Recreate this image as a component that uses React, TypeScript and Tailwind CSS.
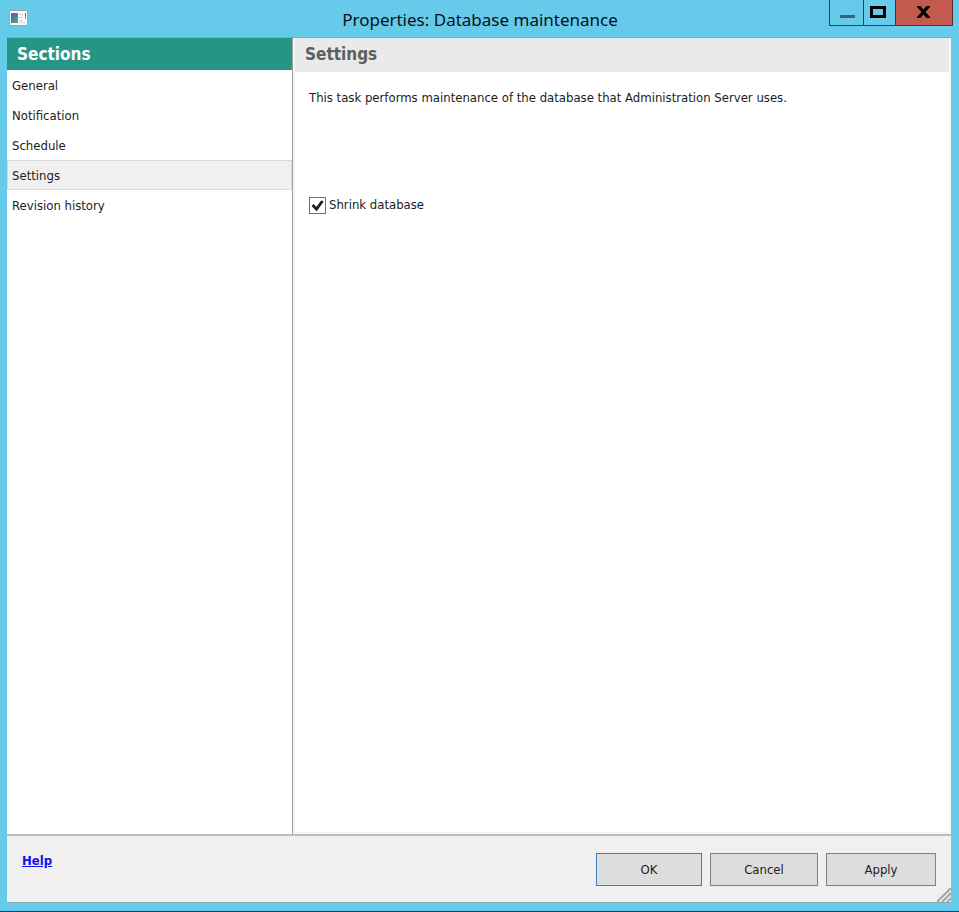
import { useState } from 'react';
import clsx from 'clsx';

const sections = ['General', 'Notification', 'Schedule', 'Settings', 'Revision history'];

function WindowIcon() {
  return (
    <svg width="19" height="16" viewBox="0 0 19 16" aria-hidden="true">
      <defs>
        <linearGradient id="pane" x1="0" y1="0" x2="1" y2="1">
          <stop offset="0.300" stopColor="#4a7396" />
          <stop offset="0.900" stopColor="#5aa67c" />
        </linearGradient>
      </defs>
      <rect x="0.5" y="0.5" width="18" height="15" fill="#fbfbfb" stroke="#a3a5a6" />
      <rect x="2" y="3" width="7" height="10" fill="url(#pane)" />
      <path d="M10 4.500h4M10 7.500h4M10 10.500h4M10 12.500h6" stroke="#cdd1d3" />
      <rect x="16" y="3" width="1" height="3" fill="#3b6288" />
      <rect x="16" y="6" width="1" height="3" fill="#5aa67c" />
    </svg>
  );
}

function TitleBar() {
  return (
    <header className="grid h-[37px] grid-cols-[1fr_auto_1fr] items-start pr-[6px] pl-[7px]">
      <div className="pt-[10px] pl-[2px]">
        <WindowIcon />
      </div>
      <h1 className="pt-2 font-['Noto_Sans',sans-serif] text-[17px] leading-6 text-[#081216]">
        Properties: Database maintenance
      </h1>
      <div className="flex h-[26px] justify-end">
        <button
          type="button"
          aria-label="Minimize"
          className="flex w-[34px] justify-end border-b border-l border-[#3d3d3d] pt-[15px] pr-2"
        >
          <span className="h-[3px] w-[15px] bg-[#336675]" />
        </button>
        <button
          type="button"
          aria-label="Maximize"
          className="flex w-8 justify-center border-b border-l border-[#3d3d3d] pt-[6px]"
        >
          <span className="mr-1 h-3 w-4 border-[3px] border-black" />
        </button>
        <button
          type="button"
          aria-label="Close"
          className="flex w-[58px] justify-center border-x border-b border-[#5a2f31] bg-[#c35a50] pt-[6px]"
        >
          <svg className="mr-px" width="13" height="12" viewBox="0 0 13 12" aria-hidden="true">
            <path d="M0 0h3.500l3 3.500 3-3.500H13v1L8.500 6l4.500 5v1H9.500l-3-3.500-3 3.500H0v-1l4.500-5L0 1z" fill="#000" />
          </svg>
        </button>
      </div>
    </header>
  );
}

interface SidebarProps {
  active: string;
  onSelect: (name: string) => void;
}

function Sidebar({ active, onSelect }: SidebarProps) {
  return (
    <nav className="w-[286px] shrink-0 border-r border-[#a0a0a0] bg-white">
      <h2 className="h-8 bg-[#239685] pl-[10px] text-[17px] leading-8 font-bold text-white">
        Sections
      </h2>
      <ul>
        {sections.map((name) => (
          <li key={name}>
            <button
              type="button"
              onClick={() => onSelect(name)}
              className={clsx(
                'block h-[30px] w-full border pt-px pl-1 text-left',
                name === active ? 'border-[#dadada] bg-[#f0f0f0]' : 'border-transparent'
              )}
            >
              {name}
            </button>
          </li>
        ))}
      </ul>
    </nav>
  );
}

function SettingsPanel() {
  const [shrink, setShrink] = useState(true);

  return (
    <main className="min-w-0 flex-1 border-x-2 border-b-2 border-[#f4f4f4] bg-white">
      <h2 className="h-[34px] bg-[#e8eaeb] pl-[10px] text-[17px] leading-8 font-bold text-[#606060]">
        Settings
      </h2>
      <div className="px-[14px] pt-4">
        <p className="leading-5">
          This task performs maintenance of the database that Administration Server uses.
        </p>
        <label className="mt-[87px] flex w-fit items-center gap-[3px] leading-5">
          <span className="relative flex">
            <input
              type="checkbox"
              checked={shrink}
              onChange={(e) => setShrink(e.target.checked)}
              className="size-[17px] appearance-none border border-[#707070] bg-white"
            />
            {shrink && (
              <svg
                className="pointer-events-none absolute inset-0"
                width="17"
                height="17"
                viewBox="0 0 17 17"
                aria-hidden="true"
              >
                <path d="M3.500 8l4 4 6-8" fill="none" stroke="#1c1c1c" strokeWidth="2.800" />
              </svg>
            )}
          </span>
          Shrink database
        </label>
      </div>
    </main>
  );
}

function Footer() {
  const button = 'h-[33px] border bg-[#dddddd]';

  return (
    <footer className="relative flex h-[68px] items-start justify-between border-t-2 border-[#bdbdbd] bg-[#f0f0f0] px-[15px]">
      <a href="#help" className="mt-[15px] leading-5 font-bold text-[#1010f0] underline">
        Help
      </a>
      <div className="mt-[17px] flex gap-2">
        <button type="button" className={clsx(button, 'w-[106px] border-[#3c7fb9]')}>
          OK
        </button>
        <button type="button" className={clsx(button, 'w-[108px] border-[#808080]')}>
          Cancel
        </button>
        <button type="button" className={clsx(button, 'w-[110px] border-[#808080]')}>
          Apply
        </button>
      </div>
      {/* resize grip */}
      <svg className="absolute right-0 bottom-0" width="14" height="14" viewBox="0 0 14 14" aria-hidden="true">
        <path d="M0 14L14 0M5 14l9-9M10 14l4-4" stroke="#a3a3a3" strokeWidth="2" />
      </svg>
    </footer>
  );
}

export default function App() {
  const [active, setActive] = useState('Settings');

  return (
    <div className="flex min-h-screen flex-col border-b border-[#1f3a45] bg-[#66caea] pb-2 font-['DejaVu_Sans_Condensed','DejaVu_Sans',sans-serif] text-[13px] text-[#1c1c1c]">
      <TitleBar />
      <div className="mr-2 ml-[7px] flex flex-1 flex-col border-y border-[#8aa6b0]">
        <div className="flex flex-1">
          <Sidebar active={active} onSelect={setActive} />
          <SettingsPanel />
        </div>
        <Footer />
      </div>
    </div>
  );
}
